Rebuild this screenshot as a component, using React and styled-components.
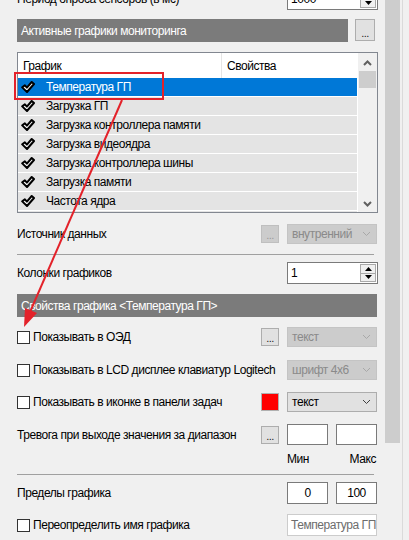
import React from "react";
import styled, { createGlobalStyle } from "styled-components";

const GlobalStyle = createGlobalStyle`
  html, body {
    margin: 0;
    padding: 0;
    background: #f0f0f0;
  }
  body {
    font-family: "Liberation Sans", Arial, sans-serif;
    font-size: 12px;
    letter-spacing: -0.45px;
    color: #000;
  }
`;

const Window = styled.div`
  position: relative;
  display: flex;
  width: 409px;
  height: 540px;
  overflow: hidden;
  background: #f0f0f0;
`;

const Panel = styled.div`
  flex: none;
  width: 385px;
  height: 540px;
  overflow: hidden;
`;

const Content = styled.div`
  display: flex;
  flex-direction: column;
  margin-top: -12px;
  padding: 0 8px 0 17px;
`;

const Row = styled.div`
  display: grid;
  grid-template-columns: minmax(0, 1fr) 18px 90px;
  column-gap: 8px;
  align-items: center;
  height: ${(p) => p.h || 20}px;
  margin-top: ${(p) => p.mt || 0}px;
`;

const Label = styled.div`
  display: flex;
  align-items: center;
  gap: 3px;
  white-space: nowrap;
  min-width: 0;
  grid-column: ${(p) => (p.wide ? "1 / 3" : "1")};
`;

const Check = styled.span`
  width: 11px;
  height: 11px;
  border: 1px solid #333;
  background: #fff;
  flex: none;
`;

const HeaderLine = styled.div`
  display: flex;
  gap: 7px;
  margin-top: ${(p) => p.mt}px;
`;

const Header = styled.div`
  flex: ${(p) => (p.short ? "none" : "1")};
  width: ${(p) => (p.short ? "331px" : "auto")};
  height: 23px;
  background: #7b7b7b;
  color: #fff;
  padding-left: 4px;
  display: flex;
  align-items: center;
  box-sizing: border-box;
`;

const DotsButton = styled.div`
  box-sizing: border-box;
  width: ${(p) => p.w || 18}px;
  height: ${(p) => p.h || 18}px;
  grid-column: 2;
  background: ${(p) => (p.disabled ? "#cccccc" : "#e1e1e1")};
  border: 1px solid ${(p) => (p.disabled ? "#bfbfbf" : "#adadad")};
  color: ${(p) => (p.disabled ? "#9a9a9a" : "#222")};
  display: flex;
  justify-content: center;
  align-items: flex-end;
  font-size: 11px;
  line-height: 13px;
  letter-spacing: -0.5px;
`;

const Swatch = styled.div`
  grid-column: 2;
  width: 18px;
  height: 18px;
  box-sizing: border-box;
  background: #ff0000;
  border: 1px solid #b0b0b0;
`;

const Select = styled.div`
  grid-column: 3;
  box-sizing: border-box;
  height: 20px;
  padding: 0 5px 0 4px;
  display: flex;
  align-items: center;
  justify-content: space-between;
  background: ${(p) => (p.disabled ? "#cccccc" : "#e1e1e1")};
  border: 1px solid ${(p) => (p.disabled ? "#c4c4c4" : "#adadad")};
  color: ${(p) => (p.disabled ? "#8a8a8a" : "#000")};
`;

const TextBox = styled.div`
  box-sizing: border-box;
  height: ${(p) => p.h || 22}px;
  background: #fff;
  border: 1px solid ${(p) => (p.muted ? "#cccccc" : "#7a7a7a")};
  color: ${(p) => (p.muted ? "#6d6d6d" : "#000")};
  display: flex;
  align-items: center;
  justify-content: ${(p) => (p.center ? "center" : "flex-start")};
  padding: 0 3px;
  overflow: hidden;
  white-space: nowrap;
`;

const Pair = styled.div`
  grid-column: 3;
  display: grid;
  grid-template-columns: 41px 41px;
  justify-content: space-between;
`;

const Spin = styled.div`
  grid-column: 3;
  width: 91px;
  height: 22px;
  box-sizing: border-box;
  border: 1px solid #7a7a7a;
  background: #fff;
  display: flex;
  justify-content: space-between;
  padding: 1px 1px 1px 3px;
  line-height: 18px;
`;

const SpinButtons = styled.div`
  display: flex;
  flex-direction: column;
  width: 16px;
`;

const SpinButton = styled.div`
  flex: 1;
  background: #f0f0f0;
  border: 1px solid #a9a9a9;
  display: flex;
  align-items: center;
  justify-content: center;
  & + & {
    border-top: none;
  }
`;

const Separator = styled.div`
  height: 1px;
  width: 357px;
  background: #a0a0a0;
  margin-top: ${(p) => p.mt}px;
`;

const Captions = styled.div`
  grid-column: 3;
  display: flex;
  justify-content: space-between;
  padding-right: 1px;
`;

/* list box */

const ListBox = styled.div`
  margin-top: 10px;
  width: 361px;
  height: 161px;
  box-sizing: border-box;
  border: 1px solid #828790;
  background: #fff;
  display: grid;
  grid-template-columns: 340px 1fr;
  overflow: hidden;
`;

const ListMain = styled.div`
  overflow: hidden;
  border-right: 1px solid #fff;
`;

const ListHead = styled.div`
  height: 25px;
  display: grid;
  grid-template-columns: 204px 1fr;
  align-items: center;
`;

const HeadCell = styled.div`
  height: 100%;
  display: flex;
  align-items: center;
  padding-left: ${(p) => p.pad}px;
  border-right: ${(p) => (p.divider ? "1px solid #e5e5e5" : "none")};
`;

const ListRow = styled.div`
  height: 18px;
  border-bottom: 1px solid #fff;
  display: flex;
  align-items: center;
  gap: 11px;
  padding-left: 3px;
  background: ${(p) => (p.selected ? "#0078d7" : "#e4e4e4")};
  color: ${(p) => (p.selected ? "#fff" : "#000")};
  white-space: nowrap;
`;

const ListScroll = styled.div`
  background: #f0f0f0;
  display: flex;
  flex-direction: column;
  align-items: center;
  padding-top: 1px;
`;

const ArrowBox = styled.div`
  height: 17px;
  display: flex;
  align-items: center;
  justify-content: center;
`;

const Thumb = styled.div`
  width: 17px;
  height: 17px;
  background: #cdcdcd;
`;

const Filler = styled.div`
  flex: 1;
`;

/* outer scroll bar */

const OuterScroll = styled.div`
  flex: none;
  width: 15px;
  height: 540px;
  background: #f0f0f0;
`;

const OuterThumb = styled.div`
  height: 443px;
  background: #cdcdcd;
`;

const Edge = styled.div`
  flex: none;
  width: 7px;
  height: 540px;
  margin-left: 2px;
  box-sizing: border-box;
  background: #f0f0f0;
  border-left: 1px solid #dadada;
`;

const Overlay = styled.svg`
  position: absolute;
  left: 0;
  top: 0;
  pointer-events: none;
`;

const Tick = () => (
  <svg width="14" height="12" viewBox="0 0 14 12">
    <path
      d="M1.2 6.4 L3.9 4.3 L5.9 6.6 L10.7 1 L13 3 L6 11 Z"
      fill="#fff"
      stroke="#000"
      strokeWidth="2"
      strokeLinejoin="round"
    />
  </svg>
);

const Chevron = ({ up, color = "#606060", thin }) => (
  <svg width="9" height="6" viewBox="0 0 9 6">
    <polyline
      points={up ? "1,5 4.5,1.5 8,5" : "1,1 4.5,4.5 8,1"}
      fill="none"
      stroke={color}
      strokeWidth={thin ? 1 : 2}
    />
  </svg>
);

const Triangle = ({ up }) => (
  <svg width="7" height="4" viewBox="0 0 7 4">
    <polygon points={up ? "0,4 3.5,0 7,4" : "0,0 7,0 3.5,4"} fill="#000" />
  </svg>
);

const graphs = [
  "Температура ГП",
  "Загрузка ГП",
  "Загрузка контроллера памяти",
  "Загрузка видеоядра",
  "Загрузка контроллера шины",
  "Загрузка памяти",
  "Частота ядра",
  "Частота памяти",
];

const SpinBox = ({ value }) => (
  <Spin>
    <span>{value}</span>
    <SpinButtons>
      <SpinButton>
        <Triangle up />
      </SpinButton>
      <SpinButton>
        <Triangle />
      </SpinButton>
    </SpinButtons>
  </Spin>
);

const App = () => {
  return (
    <Window>
      <GlobalStyle />
      <Panel>
        <Content>
          <Row h={22}>
            <Label>Период опроса сенсоров (в мс)</Label>
            <span />
            <SpinBox value="1000" />
          </Row>

          <HeaderLine mt={9}>
            <Header short>Активные графики мониторинга</Header>
            <DotsButton w={20} h={22}>...</DotsButton>
          </HeaderLine>

          <ListBox>
            <ListMain>
              <ListHead>
                <HeadCell pad={5} divider>
                  График
                </HeadCell>
                <HeadCell pad={5}>Свойства</HeadCell>
              </ListHead>
              {graphs.map((g, i) => (
                <ListRow key={g} selected={i === 0}>
                  <Tick />
                  {g}
                </ListRow>
              ))}
            </ListMain>
            <ListScroll>
              <ArrowBox>
                <Chevron up />
              </ArrowBox>
              <Thumb />
              <Filler />
              <ArrowBox>
                <Chevron />
              </ArrowBox>
            </ListScroll>
          </ListBox>

          <Row mt={11}>
            <Label>Источник данных</Label>
            <DotsButton disabled>...</DotsButton>
            <Select disabled>
              внутренний
              <Chevron color="#a8a8a8" thin />
            </Select>
          </Row>

          <Separator mt={10} />

          <Row h={22} mt={7}>
            <Label>Колонки графиков</Label>
            <span />
            <SpinBox value="1" />
          </Row>

          <HeaderLine mt={10}>
            <Header>Свойства графика &lt;Температура ГП&gt;</Header>
          </HeaderLine>

          <Row mt={10}>
            <Label>
              <Check />
              Показывать в ОЭД
            </Label>
            <DotsButton>...</DotsButton>
            <Select disabled>
              текст
              <Chevron color="#a8a8a8" thin />
            </Select>
          </Row>

          <Row mt={13}>
            <Label wide>
              <Check />
              Показывать в LCD дисплее клавиатур Logitech
            </Label>
            <Select disabled>
              шрифт 4x6
              <Chevron color="#a8a8a8" thin />
            </Select>
          </Row>

          <Row mt={12}>
            <Label>
              <Check />
              Показывать в иконке в панели задач
            </Label>
            <Swatch />
            <Select>
              текст
              <Chevron color="#404040" thin />
            </Select>
          </Row>

          <Row h={21} mt={12}>
            <Label>Тревога при выходе значения за диапазон</Label>
            <DotsButton>...</DotsButton>
            <Pair>
              <TextBox h={21} />
              <TextBox h={21} />
            </Pair>
          </Row>

          <Row h={14} mt={7}>
            <span />
            <span />
            <Captions>
              <span>Мин</span>
              <span>Макс</span>
            </Captions>
          </Row>

          <Separator mt={8} />

          <Row h={22} mt={7}>
            <Label>Пределы графика</Label>
            <span />
            <Pair>
              <TextBox center>0</TextBox>
              <TextBox center>100</TextBox>
            </Pair>
          </Row>

          <Row h={22} mt={10}>
            <Label>
              <Check />
              Переопределить имя графика
            </Label>
            <span />
            <TextBox muted>Температура ГП</TextBox>
          </Row>
        </Content>
      </Panel>

      <OuterScroll>
        <OuterThumb />
      </OuterScroll>
      <Edge />

      <Overlay width="409" height="540">
        <rect x="15" y="73" width="148" height="26" fill="none" stroke="#e3222a" strokeWidth="2" />
        <line x1="122" y1="100" x2="30" y2="312" stroke="#e3222a" strokeWidth="2" />
        <polygon points="24,327 37,313 25,308" fill="#e3222a" />
      </Overlay>
    </Window>
  );
};

export default App;
